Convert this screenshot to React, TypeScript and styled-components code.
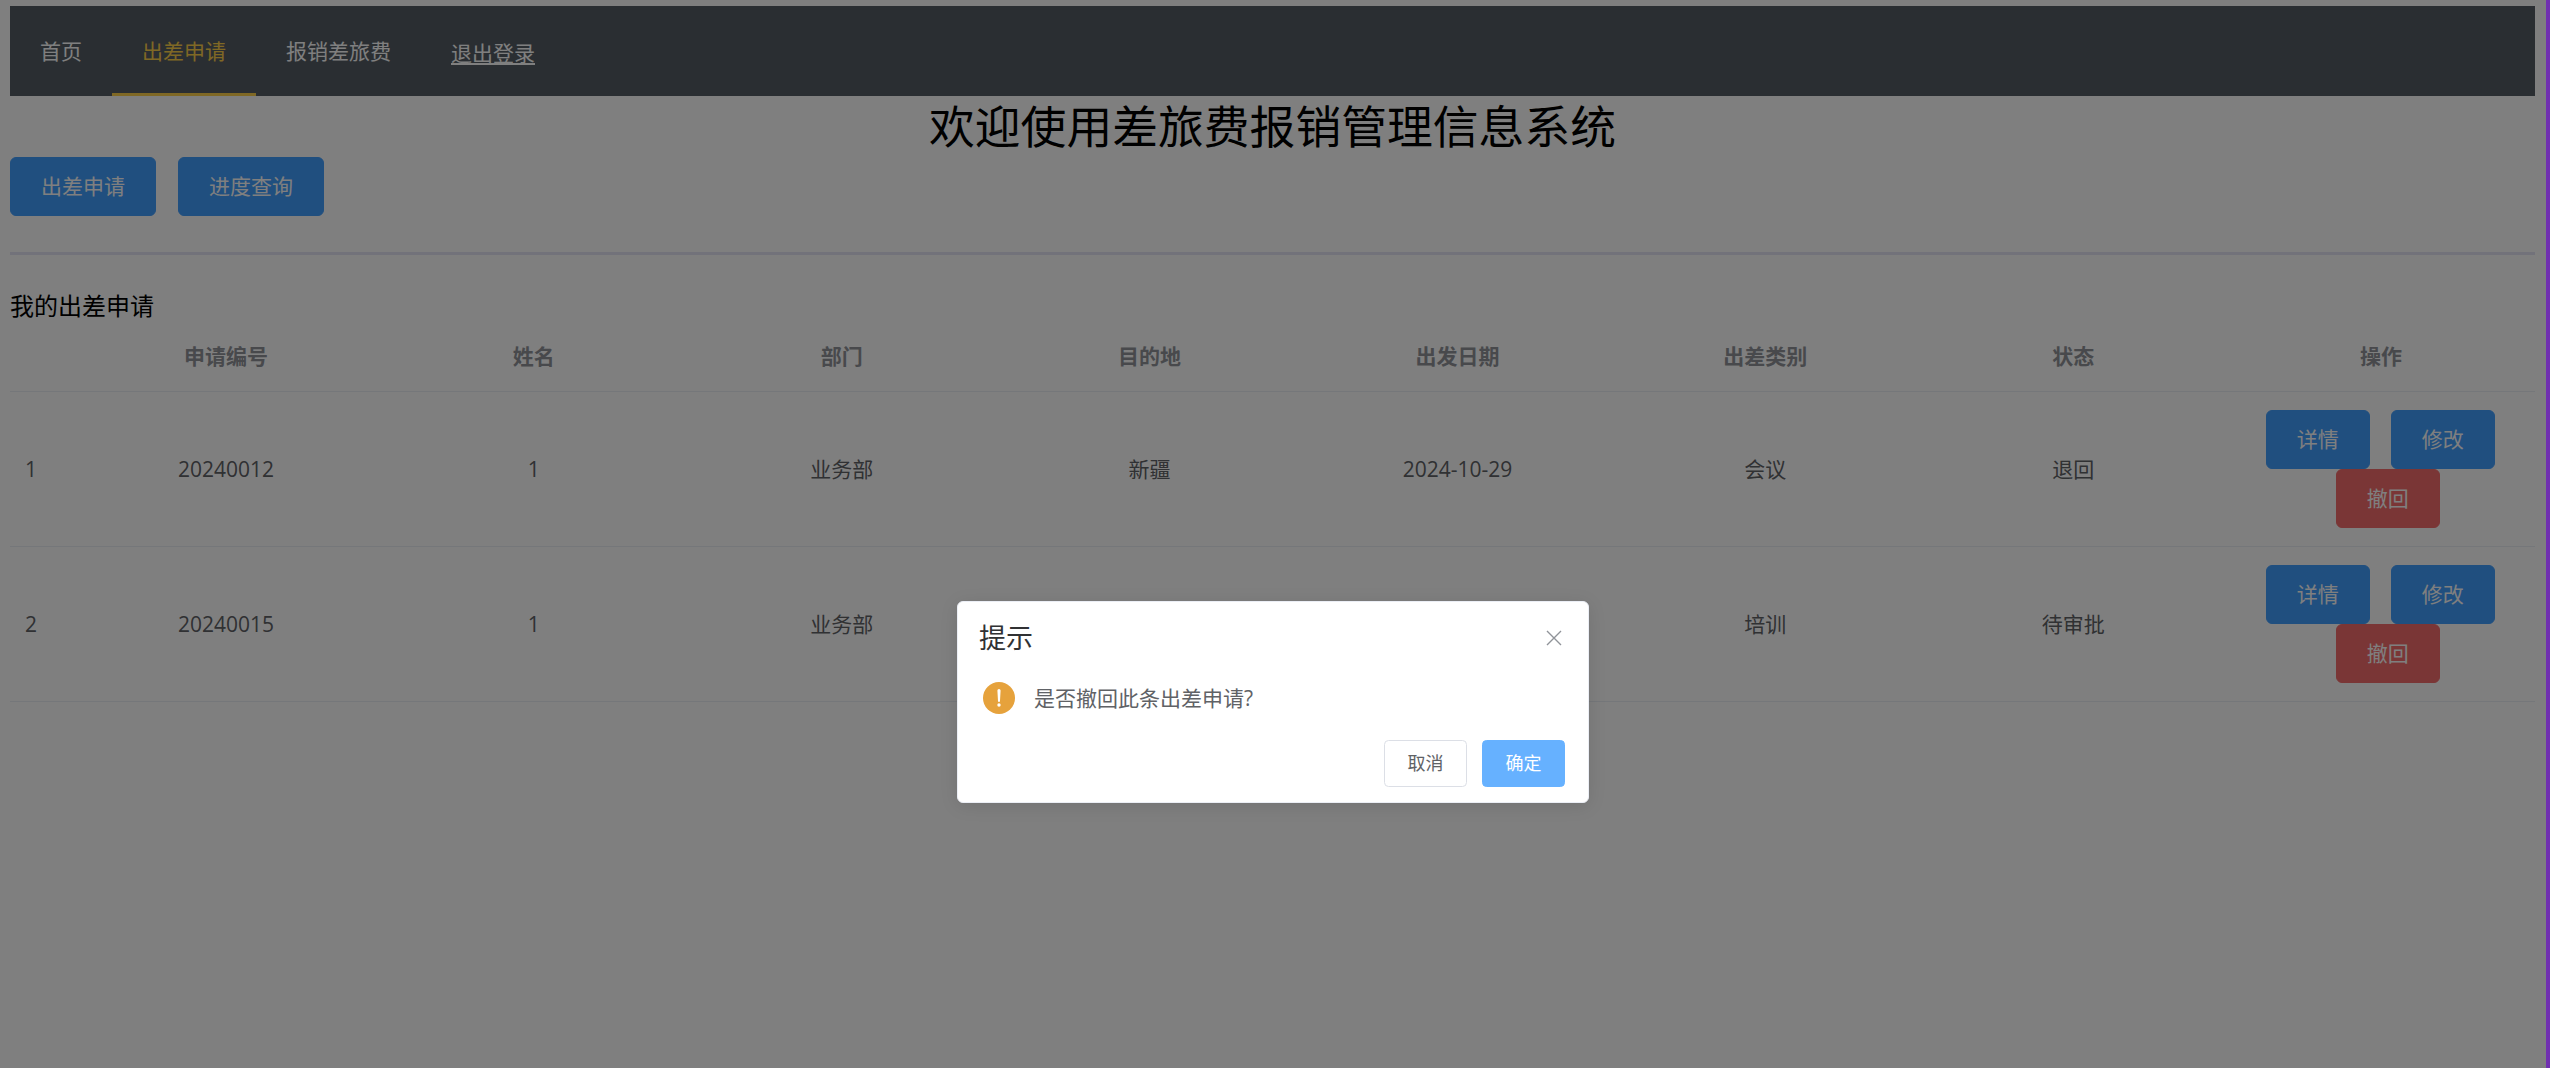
import React from "react";
import styled, { createGlobalStyle } from "styled-components";

const Global = createGlobalStyle`
  html, body { margin: 0; padding: 0; height: 100%; background: #fff; overflow: hidden; }
  #root { height: 100%; }
  * { box-sizing: border-box; }
`;

const FONT = `"Open Sans", "Noto Sans CJK SC", sans-serif`;

const Shell = styled.div`
  display: flex;
  height: 100vh;
  font-family: ${FONT};
  background: #fff;
`;

const Edge = styled.div`
  flex: 0 0 4px;
  background: #7030b0;
`;

const Stage = styled.div`
  position: relative;
  flex: 1;
  min-width: 0;
  padding: 6px 11px 0 10px;
`;

const NavBar = styled.nav`
  display: flex;
  height: 90px;
  background: #545c64;
`;

const NavItem = styled.a<{ $active?: boolean }>`
  display: flex;
  align-items: center;
  height: 90px;
  padding: 0 30px;
  font-size: 21px;
  color: ${(p) => (p.$active ? "#ffd04b" : "#fff")};
  border-bottom: 3px solid ${(p) => (p.$active ? "#ffd04b" : "transparent")};
`;

const NavLink = styled.a`
  align-self: center;
  margin: 3px 0 0 0;
  padding: 0 30px;
  font-size: 21px;
  line-height: 30px;
  color: #fff;
  text-decoration: underline;
`;

const Title = styled.h1`
  margin: 0;
  height: 61px;
  font-size: 45.8px;
  line-height: 61px;
  font-weight: 400;
  text-align: center;
  color: #000;
`;

const Toolbar = styled.div`
  display: flex;
  gap: 22px;
`;

const Button = styled.button<{ $tone: "primary" | "danger" }>`
  height: 59px;
  padding: 0 30px;
  border: 1.5px solid ${(p) => (p.$tone === "primary" ? "#409eff" : "#f56c6c")};
  border-radius: 6px;
  background: ${(p) => (p.$tone === "primary" ? "#409eff" : "#f56c6c")};
  color: #fff;
  font-family: ${FONT};
  font-size: 21px;
  line-height: 1;
`;

const Rule = styled.hr`
  margin: 36px 0 0;
  height: 3px;
  border: 0;
  background: #e4e4f4;
`;

const Heading = styled.div`
  margin-top: 36px;
  height: 30px;
  font-size: 24px;
  line-height: 30px;
  color: #000;
`;

const Table = styled.table`
  width: 100%;
  table-layout: fixed;
  border-collapse: separate;
  border-spacing: 0;
`;

const Th = styled.th`
  padding: 18px 15px;
  font-size: 21px;
  line-height: 34px;
  font-weight: 700;
  color: #909399;
  text-align: center;
  border-bottom: 1px solid #ebeef5;
`;

const Td = styled.td<{ $left?: boolean }>`
  height: 155px;
  padding: 18px 15px;
  font-size: 21px;
  line-height: 34px;
  color: #606266;
  text-align: ${(p) => (p.$left ? "left" : "center")};
  vertical-align: middle;
  border-bottom: 1px solid #ebeef5;
`;

const Actions = styled.div`
  display: flex;
  flex-wrap: wrap;
  justify-content: center;
  column-gap: 6px;
  margin-left: -1.5px;
  & > * + * { margin-left: 15px; }
`;

const Overlay = styled.div`
  position: absolute;
  inset: 0;
  display: flex;
  justify-content: center;
  align-items: flex-start;
  padding-top: 601px;
  background: rgba(0, 0, 0, 0.5);
`;

const Dialog = styled.div`
  width: 632px;
  height: 202px;
  background: #fff;
  border: 1.5px solid #ebeef5;
  border-radius: 6px;
  box-shadow: 0 3px 18px rgba(0, 0, 0, 0.1);
`;

const DialogHeader = styled.div`
  display: flex;
  justify-content: space-between;
  align-items: center;
  padding: 22px 21px 15px 21px;
`;

const DialogTitle = styled.span`
  font-size: 27px;
  line-height: 27px;
  color: #303133;
`;

const CloseIcon = styled.svg`
  width: 16px;
  height: 16px;
  margin-right: 5px;
  color: #909399;
`;

const DialogBody = styled.div`
  display: flex;
  align-items: center;
  gap: 19.5px;
  padding: 16px 21px 0 24.5px;
`;

const WarnIcon = styled.svg`
  flex: 0 0 32px;
  width: 32px;
  height: 32px;
`;

const Message = styled.span`
  font-size: 21px;
  line-height: 32px;
  color: #606266;
`;

const DialogFooter = styled.div`
  display: flex;
  justify-content: flex-end;
  gap: 15px;
  padding: 25.5px 23px 0;
`;

const SmallButton = styled.button<{ $primary?: boolean }>`
  width: 83px;
  height: 47px;
  padding: 0;
  border: 1.5px solid ${(p) => (p.$primary ? "#66b1ff" : "#dcdfe6")};
  border-radius: 4.5px;
  background: ${(p) => (p.$primary ? "#66b1ff" : "#fff")};
  color: ${(p) => (p.$primary ? "#fff" : "#606266")};
  font-family: ${FONT};
  font-size: 18px;
  line-height: 1;
`;

const COLUMNS = ["申请编号", "姓名", "部门", "目的地", "出发日期", "出差类别", "状态", "操作"];

const ROWS = [
  ["1", "20240012", "1", "业务部", "新疆", "2024-10-29", "会议", "退回"],
  ["2", "20240015", "1", "业务部", "", "", "培训", "待审批"],
];

export default function App() {
  return (
    <Shell>
      <Global />
      <Stage>
        <NavBar>
          <NavItem>首页</NavItem>
          <NavItem $active>出差申请</NavItem>
          <NavItem>报销差旅费</NavItem>
          <NavLink>退出登录</NavLink>
        </NavBar>
        <Title>欢迎使用差旅费报销管理信息系统</Title>
        <Toolbar>
          <Button $tone="primary">出差申请</Button>
          <Button $tone="primary">进度查询</Button>
        </Toolbar>
        <Rule />
        <Heading>我的出差申请</Heading>
        <Table>
          <colgroup>
            <col style={{ width: 62 }} />
          </colgroup>
          <thead>
            <tr>
              <Th />
              {COLUMNS.map((c) => (
                <Th key={c}>{c}</Th>
              ))}
            </tr>
          </thead>
          <tbody>
            {ROWS.map((r) => (
              <tr key={r[0]}>
                {r.map((v, i) => (
                  <Td key={i} $left={i === 0}>
                    {v}
                  </Td>
                ))}
                <Td>
                  <Actions>
                    <Button $tone="primary">详情</Button>
                    <Button $tone="primary">修改</Button>
                    <Button $tone="danger">撤回</Button>
                  </Actions>
                </Td>
              </tr>
            ))}
          </tbody>
        </Table>
        <Overlay>
          <Dialog>
            <DialogHeader>
              <DialogTitle>提示</DialogTitle>
              <CloseIcon viewBox="0 0 16 16" fill="none" stroke="currentColor" strokeWidth="1.4">
                <path d="M1 1 L15 15 M15 1 L1 15" />
              </CloseIcon>
            </DialogHeader>
            <DialogBody>
              <WarnIcon viewBox="0 0 32 32">
                <circle cx="16" cy="16" r="16" fill="#e6a23c" />
                <path d="M14.4 8.6 a1.6 1.6 0 0 1 3.2 0 L17 19 a1 1 0 0 1 -2 0 Z" fill="#fff" />
                <circle cx="16" cy="23" r="1.7" fill="#fff" />
              </WarnIcon>
              <Message>是否撤回此条出差申请?</Message>
            </DialogBody>
            <DialogFooter>
              <SmallButton>取消</SmallButton>
              <SmallButton $primary>确定</SmallButton>
            </DialogFooter>
          </Dialog>
        </Overlay>
      </Stage>
      <Edge />
    </Shell>
  );
}
